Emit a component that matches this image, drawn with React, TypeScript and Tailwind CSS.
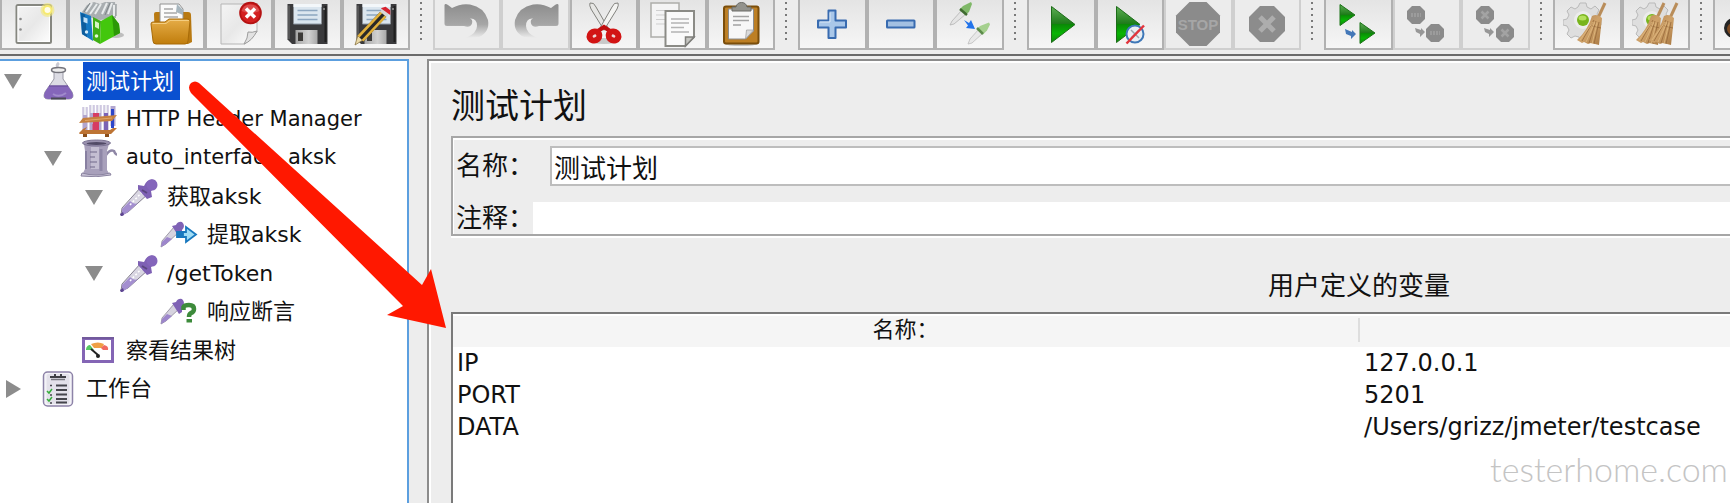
import type { ReactNode } from "react";

const Svg = ({ children, size = 48 }: { children: ReactNode; size?: number }) => (
  <svg
    width={size}
    height={size}
    viewBox={`0 0 ${size} ${size}`}
    className="shrink-0"
    aria-hidden="true"
  >
    {children}
  </svg>
);

const Gradients = () => (
  <svg className="absolute h-0 w-0" aria-hidden="true">
    <defs>
      <linearGradient id="folder" x1="0" y1="0" x2="0" y2="1">
        <stop offset="0" stopColor="#e6ad48" />
        <stop offset="1" stopColor="#c07d0c" />
      </linearGradient>
      <linearGradient id="play" x1="0" y1="0" x2="0" y2="1">
        <stop offset="0" stopColor="#5fae55" />
        <stop offset="0.49" stopColor="#1c7a18" />
        <stop offset="0.5" stopColor="#0a8a06" />
        <stop offset="0.75" stopColor="#08b404" />
        <stop offset="1" stopColor="#0c8a0a" />
      </linearGradient>
      <linearGradient id="paper" x1="0" y1="0" x2="1" y2="1">
        <stop offset="0" stopColor="#f4f4f4" />
        <stop offset="0.5" stopColor="#e8e8e8" />
        <stop offset="1" stopColor="#ffffff" />
      </linearGradient>
      <linearGradient id="curl" x1="0" y1="0" x2="0" y2="1">
        <stop offset="0" stopColor="#8d8d8d" />
        <stop offset="0.6" stopColor="#a6a6a6" />
        <stop offset="1" stopColor="#ececec" />
      </linearGradient>
      <linearGradient id="shutter" x1="0" y1="0" x2="1" y2="0">
        <stop offset="0" stopColor="#a5a5a5" />
        <stop offset="0.6" stopColor="#d2d2d2" />
        <stop offset="1" stopColor="#a8a8a8" />
      </linearGradient>
      <linearGradient id="straw" x1="0" y1="0" x2="1" y2="1">
        <stop offset="0" stopColor="#b08050" />
        <stop offset="0.5" stopColor="#cfa269" />
        <stop offset="1" stopColor="#a87842" />
      </linearGradient>
    </defs>
  </svg>
);

const NewIcon = () => (
  <Svg>
    <rect x="6.500" y="5" width="34.500" height="38" rx="1.500" fill="url(#paper)" stroke="#868780" strokeWidth="2" />
    <rect x="8" y="6.500" width="31.500" height="35" fill="none" stroke="#fff" />
    <circle cx="10.500" cy="19" r="1.300" fill="#8a8a8a" />
    <circle cx="10.500" cy="29.500" r="1.300" fill="#8a8a8a" />
    <circle cx="37.500" cy="10" r="7" fill="#f3e877" opacity="0.6" />
    <circle cx="37.500" cy="10" r="5" fill="#f6ea70" />
    <circle cx="37.500" cy="10" r="3" fill="#fffde8" />
  </Svg>
);

const TemplatesIcon = () => (
  <Svg>
    <ellipse cx="38" cy="35" rx="8" ry="3" fill="#a8a8a8" opacity="0.7" />
    <path d="M4 12 9 5 16 2 22 4 27 2H37L38 18 22 20 6 16Z" fill="#a9aeb1" />
    <path d="M8 12 14 3M12 14 19 4M17 14 23 4M24 14 29 3M30 14 34 3M36 5V16" stroke="#e8ebec" strokeWidth="2" />
    <path d="M6 12 12 3M27 15 32 3M38 4V16" stroke="#7d8488" strokeWidth="1" />
    <path d="M2 12 13 16 15 41 4 34Z" fill="#1679c4" />
    <path d="M3 13 7 14.500 9 37 4 34Z" fill="#0d5d9d" />
    <path d="m5.500 17 4 1.500v5l-4-1.500Z" fill="#bfe0f7" />
    <circle cx="8.500" cy="32" r="1.700" fill="#d5ecfa" />
    <path d="m15 17 8 4-1 23-7-4Z" fill="#3fae14" />
    <path d="m17 21 4 2v6l-4-2Z" fill="#d6f5c2" />
    <circle cx="18.500" cy="36" r="1.800" fill="#e3f8d6" />
    <path d="M23 21 34 15 41 24 42 33 22 44Z" fill="#43c70d" />
    <path d="M34 15 41 24 42 33 36 36Z" fill="#2c9807" />
  </Svg>
);

const OpenIcon = () => (
  <Svg>
    <path d="M7 14q0-2 2-2h32q3 0 3 3l1 27-4 2H8Z" fill="#b97a12" />
    <path d="M13 4h19l4 5v17H13Z" fill="#fbfbfb" stroke="#929292" />
    <path d="m30 4 6 6v5l-7-3Z" fill="#a6b5bd" />
    <path d="M17 9h9M17 13h13M17 17h14" stroke="#a9a9a9" strokeWidth="1.500" />
    <path d="M4 24q0-2 2-2h12l4-3h18q3 0 3 2l-2 20q0 3-3 3H9q-3 0-3-3Z" fill="url(#folder)" stroke="#a86b08" />
    <path d="M5.500 23.500H19l4-3h19" fill="none" stroke="#f3cd80" />
  </Svg>
);

const CloseIcon = () => (
  <Svg>
    <path d="M6 4h36v28L30 44H6Z" fill="url(#paper)" stroke="#b5b5b5" />
    <path d="M42 31q-5 2-9 1 0 6-4 12 8-3 13-13Z" fill="#e2e2e2" stroke="#9d9d9d" />
    <circle cx="35.500" cy="13" r="11.300" fill="#b51212" />
    <circle cx="35.500" cy="13" r="9.500" fill="#d32020" />
    <path d="M26.500 11a9.500 9.500 0 0 1 18 0q-9 4-18 0Z" fill="#e56a6a" opacity="0.6" />
    <path d="m31 8.500 9 9m0-9-9 9" stroke="#fff" strokeWidth="3.500" />
  </Svg>
);

const Floppy = () => (
  <>
    <path d="M4.500 4h40v40H9l-4.500-4.500Z" fill="#3a3a3c" />
    <path d="M6 5.500v33.500" stroke="#6f6f6f" />
    <path d="M42.500 6v36" stroke="#1f1f1f" strokeWidth="2" />
    <rect x="10.500" y="4" width="28" height="20" fill="#dbe6ef" />
    <path d="M10.500 4h28v3h-28Z" fill="#f3f7fa" />
    <path d="M14.500 10.500h20M14.500 15h20M14.500 19.500h20" stroke="#8ca6c0" strokeWidth="1.500" />
    <path d="M10.500 24h28" stroke="#8d98a3" />
    <rect x="12.500" y="30" width="22" height="14" fill="url(#shutter)" />
    <rect x="15" y="32.500" width="5" height="8.500" fill="#3c3a38" />
    <circle cx="41" cy="9" r="1" fill="#999" />
  </>
);

const SaveIcon = () => (
  <Svg>
    <Floppy />
  </Svg>
);

const SaveAsIcon = () => (
  <Svg>
    <Floppy />
    <path d="m3 45 3-10 5 5Z" fill="#ead9a8" stroke="#8a7440" strokeWidth="0.800" />
    <path d="m5.500 35.500 23-24 6 5-23 25Z" fill="#2a2a28" />
    <path d="m5.500 35.500 23-24 2 1.500-23 24.500ZM9.500 40l23-24.500 2 1.500-23 24.500Z" fill="#e2b13b" />
    <path d="m28 11.500 3-3 6.500 5-3 3.500Z" fill="#d8d8d8" />
    <path d="m30.500 8.500 3-1 4 3v3Z" fill="#d8232f" stroke="#d8232f" strokeWidth="1.500" />
  </Svg>
);

const UndoShape = () => (
  <path
    d="M1.500 5Q2 3 5 5L9 8Q18 3 27 4.500 41 7 45 20 47 32 36 37L23 38Q34 33 34 26 34 18 27 18.500q3 1 2 5-2 5-8 2.500H4q-2.500 0-2.500-2.500Z"
    fill="url(#curl)"
  />
);

const UndoIcon = () => (
  <Svg>
    <UndoShape />
  </Svg>
);

const RedoIcon = () => (
  <Svg>
    <g transform="matrix(-1 0 0 1 48 0)">
      <UndoShape />
    </g>
  </Svg>
);

const CutIcon = () => (
  <Svg>
    <ellipse cx="24" cy="41" rx="15" ry="3" fill="#c9c9c9" />
    <path d="M10 3q4-1 6 4l12 21-4 2L11 9Q9 5 10 3Z" fill="#e6e6e4" stroke="#82827e" />
    <path d="M38 3q-4-1-6 4L20 28l4 2L37 9q2-4 1-6Z" fill="#f4f4f2" stroke="#82827e" />
    <path d="m18 31 6-4 6 4" stroke="#c00f0f" strokeWidth="4" fill="none" />
    <ellipse cx="14.500" cy="36" rx="5" ry="4.500" transform="rotate(-25 14.500 36)" fill="#eed6d6" stroke="#d21414" strokeWidth="6" />
    <ellipse cx="33.500" cy="36" rx="5" ry="4.500" transform="rotate(25 33.500 36)" fill="#eed6d6" stroke="#d21414" strokeWidth="6" />
  </Svg>
);

const CopyIcon = () => (
  <Svg>
    <path d="M3 3h28v34H3Z" fill="#f4f4f4" stroke="#adada9" strokeWidth="1.500" />
    <path d="M8 10.500h17M8 15h9M8 19.500h9M8 24h9" stroke="#cfcfcf" />
    <path d="M17.500 11H46v26l-9 9H17.500Z" fill="#fafafa" stroke="#8b8b86" strokeWidth="2" />
    <path d="M23 19h18M23 23h18M23 27.500h13M23 32h18" stroke="#b4b4b4" strokeWidth="1.300" />
    <path d="M46 37h-8.500v9Z" fill="#c6c6c2" stroke="#7f7f7b" strokeWidth="1.500" />
  </Svg>
);

const PasteIcon = () => (
  <Svg>
    <ellipse cx="24" cy="44" rx="16" ry="2" fill="#c5c5c5" />
    <rect x="7" y="6.500" width="34.500" height="37" rx="2" fill="#bd7f24" stroke="#7b4e0b" strokeWidth="2" />
    <path d="M11.500 9h25v22l-8 8h-17Z" fill="#f7f7f7" stroke="#8c8c8c" />
    <path d="M36.500 30h-7l-1 9Z" fill="#dadada" stroke="#9a9a9a" strokeWidth="0.700" />
    <path d="M16 16.500h16M16 20.500h16M16 25h8" stroke="#a3a3a3" strokeWidth="1.500" />
    <path d="M15 7h4q1-4.500 5.500-4.500T30 7h4v4H15Z" fill="#93938d" stroke="#6b6b66" />
  </Svg>
);

const PlusIcon = () => (
  <Svg>
    <path d="M20.500 10.500h7v10H38v7H27.500V38h-7V27.500H10v-7h10.500Z" fill="#a9c7e9" stroke="#386bb0" strokeWidth="2" strokeLinejoin="round" />
    <path d="M22 12.500v9.500H12" fill="none" stroke="#dbe8f6" />
  </Svg>
);

const MinusIcon = () => (
  <Svg>
    <rect x="10" y="20.500" width="27.500" height="7" rx="0.500" fill="#a3c0e2" stroke="#386bb0" strokeWidth="2" />
  </Svg>
);

const ToggleIcon = () => (
  <Svg>
    <path d="m4 25 2-4L16 10l4 4L8 24Z" fill="#e4e4e4" stroke="#b3b3b3" strokeWidth="0.800" />
    <path d="m14 9 3-3 8-4 1 2-3 8-4 3Z" fill="#7fb868" />
    <path d="m14 9 7 6" stroke="#3f6a30" strokeWidth="2.500" />
    <path d="m18 20 5 3 2-3 4 9-9-1 2-2.500Z" fill="#2173ea" />
    <path d="m22 44 2-5 9-10 4 4-11 10Z" fill="#e8e8e8" stroke="#bcbcbc" strokeWidth="0.800" />
    <path d="m31 29 3-3 9-3.500 1 2-3 6-4 4Z" fill="#a5d08e" />
    <path d="m31 28 6 6" stroke="#5c8c4a" strokeWidth="2.500" />
  </Svg>
);

const StartIcon = () => (
  <Svg>
    <path d="M14.500 6.500 38 24.500 14.500 42.500Z" fill="url(#play)" stroke="#1c6c18" />
  </Svg>
);

const StartNoTimersIcon = () => (
  <Svg>
    <path d="M10.500 6.500 34 24.500 10.500 42.500Z" fill="url(#play)" stroke="#1c6c18" />
    <circle cx="29" cy="34" r="8.500" fill="#e9eef3" stroke="#3f78b8" strokeWidth="2" />
    <path d="m25 30 8 8m0-8-8 8" stroke="#9aa3ab" strokeWidth="1.500" />
    <path d="M20.500 43.500 38 25.500" stroke="#e2343c" strokeWidth="2.500" />
  </Svg>
);

const StopIcon = () => (
  <Svg>
    <path d="M15.500 2h17L46 15.500v17L32.500 46h-17L2 32.500v-17Z" fill="#8b8b8b" />
    <text x="24" y="30" textAnchor="middle" fontFamily="Liberation Sans, sans-serif" fontWeight="700" fontSize="15" fill="#a6a6a6">
      STOP
    </text>
  </Svg>
);

const ShutdownIcon = () => (
  <Svg>
    <path d="M17 6h14l11 11v14L31 42H17L6 31V17Z" fill="#8c8c8c" />
    <path d="m17 17 14 14m0-14L17 31" stroke="#adadad" strokeWidth="5" />
  </Svg>
);

const RemoteStartIcon = () => (
  <Svg>
    <path d="M6 4.500 21 15 6 25.500Z" fill="url(#play)" stroke="#1c7418" />
    <path d="M26 22.500 41 33 26 43.500Z" fill="url(#play)" stroke="#1c7418" />
    <path d="m11 29 1 5 5 2v3l5-5-4-4v2Z" fill="#4478b8" />
  </Svg>
);

const SmallOctagon = ({ x, y }: { x: number; y: number }) => (
  <path
    d={`M${x - 4} ${y - 9}h8l5 5v8l-5 5h-8l-5-5v-8Z`}
    fill="#8b8b8b"
  />
);

const RemoteStopIcon = () => (
  <Svg>
    <SmallOctagon x={13} y={15} />
    <SmallOctagon x={32} y={33} />
    <path d="M8 15h10M27 33h10" stroke="#9c9c9c" strokeWidth="4" strokeDasharray="2 1" />
    <path d="m12 28 1 4 4 2v3l5-5-4-4v2Z" fill="#979797" />
  </Svg>
);

const RemoteShutdownIcon = () => (
  <Svg>
    <SmallOctagon x={13} y={15} />
    <SmallOctagon x={33} y={33} />
    <path d="m9.500 11.500 7 7m0-7-7 7M29.500 29.500l7 7m0-7-7 7" stroke="#a3a3a3" strokeWidth="2.500" />
    <path d="m12 28 1 4 4 2v3l5-5-4-4v2Z" fill="#979797" />
  </Svg>
);

const Gear = () => (
  <>
    <path
      d="M17 3h6l1 4 4 2 4-3 4 4-2 4 2 4 2 1v6l-3 1-2 4 2 4-4 4-4-2-4 2-1 3h-5l-1-4-4-1-4 2-4-4 2-4-2-4-4-1v-5l4-1 2-4-2-4 4-4 4 2 3-2Z"
      fill="#dedede"
      stroke="#b9b9b9"
      strokeLinejoin="round"
    />
    <circle cx="20" cy="20" r="9" fill="#ececec" />
    <circle cx="20" cy="20" r="6" fill="#78b41c" />
    <ellipse cx="19.500" cy="18" rx="4" ry="2.500" fill="#b4e05c" />
  </>
);

const Broom = () => (
  <>
    <path d="M42 3 35 18" stroke="#b98d5a" strokeWidth="3" />
    <path d="M29 16q5-3 10 2l-3 27-8-2-3 1-4-2-2 1-5-3Q25 30 29 16Z" fill="url(#straw)" />
    <path d="M31 20 19 41m14-20-7 22m10-21-5 22M29 26l9 2" stroke="#96683a" strokeWidth="0.800" />
    <path d="M30 22 17 40m15-18-9 20m11-19-5 21" stroke="#e0ba82" strokeWidth="0.800" />
  </>
);

const ClearIcon = () => (
  <Svg>
    <Gear />
    <Broom />
  </Svg>
);

const ClearAllIcon = () => (
  <Svg>
    <Gear />
    <g transform="translate(-10 0)">
      <Broom />
    </g>
    <g transform="translate(3 0)">
      <Broom />
    </g>
  </Svg>
);

const SearchIcon = () => (
  <Svg>
    <path d="M4 22 10 17h9l4 5Z" fill="#2e2e2e" />
    <circle cx="10" cy="28" r="10" fill="#242424" />
    <circle cx="9" cy="29" r="6" fill="#7d4a22" />
    <circle cx="38" cy="28" r="10" fill="#242424" />
  </Svg>
);

const FlaskIcon = () => (
  <Svg size={38}>
    <path d="M20 1q-3 2-1 4" stroke="#c9c9d2" strokeWidth="3" fill="none" />
    <path d="M15 10v7L6 30q-3 7 3 7h21q6 0 3-7l-9-13v-7Z" fill="#dcdce4" stroke="#9a9aa6" />
    <path d="M10 24h19l4 6q3 7-3 7H9q-6 0-3-7Z" fill="#8566ba" />
    <path d="M10 24h19" stroke="#6f55a0" strokeWidth="1.500" />
    <path d="M14 32q6 4 13-1" stroke="#a08acc" strokeWidth="2" fill="none" />
    <ellipse cx="19.500" cy="8" rx="7" ry="2.500" fill="#eee" stroke="#74747c" strokeWidth="1.500" />
    <path d="M12 36.500h15" stroke="#4a4a55" strokeWidth="2" />
  </Svg>
);

const TubesIcon = () => (
  <Svg size={38}>
    <path d="M6 6v26M13 4v28M20 4v28M27 4v28M34 5v20" stroke="#b2a6cf" strokeWidth="5" />
    <path d="M6 6v8M13 4v8M20 4v8M27 4v8" stroke="#ececf2" strokeWidth="3" />
    <path d="M17 12v20" stroke="#d63c63" strokeWidth="6" />
    <path d="M27 12v18" stroke="#7b63b5" strokeWidth="4" />
    <path d="M33.500 8v19" stroke="#2c46c9" strokeWidth="3" />
    <path d="m4 17 34-3-5 6-33 2Z" fill="#c6803f" />
    <path d="M6 19.500 33 17" stroke="#e0a768" strokeWidth="1" />
    <path d="m4 28 4-2-4 6H0ZM34 27h4l-6 6H0l3-4h28Z" fill="#bd7434" />
    <path d="M4 33h4v3H4ZM26 33h4v3h-4Z" fill="#8a4f1c" />
    <path d="M16 23v6" stroke="#d63c63" strokeWidth="5" />
  </Svg>
);

const BeakerIcon = () => (
  <Svg size={38}>
    <path d="M27 16q4-6 8-4 1 3 3 4" stroke="#8f87a6" strokeWidth="2.500" fill="none" />
    <path d="M5 5h25l-2 7v19l3 5H3l3-6V12Z" fill="#a8a0bb" />
    <path d="M12 8h8v22h-8Z" fill="#c4bed2" />
    <path d="M22 10v22" stroke="#8e86a6" strokeWidth="3" />
    <path d="M7 12v18" stroke="#7e7698" strokeWidth="1.500" />
    <path d="M11 13h7M11 18h5M11 23h7M11 28h5" stroke="#706889" strokeWidth="1.200" />
    <ellipse cx="17.500" cy="4" rx="14" ry="3" fill="#9991ae" stroke="#7b7393" />
    <ellipse cx="17.500" cy="4.500" rx="10" ry="1.500" fill="#514a66" />
    <path d="M3 34q14 4 28 0l1 2q-15 3-30 1Z" fill="#c8c2d6" stroke="#8b84a0" />
  </Svg>
);

const DropperIcon = () => (
  <Svg size={38}>
    <path d="m1 37 1-7L21 9l7 7L8 34Z" fill="#d9d6e2" stroke="#85808f" />
    <path d="m2 31 8-8q4 4 8 2L8 34l-6 4Z" fill="#a48fd0" />
    <path d="m10 27 12-13" stroke="#fff" strokeWidth="1.500" strokeDasharray="2 2" />
    <path d="m18 7 6 1Q28-1 35 2q5 6-4 11l1 6-5 2-9-10Z" fill="#7e60b4" />
    <circle cx="32" cy="7" r="5.500" fill="#8465bb" />
    <path d="m22 12 5 3" stroke="#5b4780" strokeWidth="2" />
    <path d="m0 36 3-2 1 3-3 1.500Z" fill="#5d4590" />
  </Svg>
);

const SmallDropper = () => (
  <>
    <path d="m1 31 1-6L14 11l5 5L6 28Z" fill="#d6d3df" stroke="#8b8696" strokeWidth="0.800" />
    <path d="m2 26 5-5 5 2-6 5-5 3Z" fill="#9d86cc" />
    <path d="m12 10 4-1q2-4 6-3 4 4 0 8v5l-3 2Z" fill="#7f62b5" />
  </>
);

const ExtractorIcon = () => (
  <Svg size={38}>
    <SmallDropper />
    <path d="M17 16h9v-5l10 7.500L26 26v-5h-9v-1.500h6v-2h-6Z" fill="#9fdcf5" stroke="#1878be" strokeWidth="1.800" />
  </Svg>
);

const AssertionIcon = () => (
  <Svg size={38}>
    <SmallDropper />
    <path d="M23.500 17v-3q1-2 5.500-2 5 0 5 4 0 3-3 4-2 1-2 4" stroke="#3d8b3b" strokeWidth="4.500" fill="none" />
    <path d="M26.500 26h5.500v3.500h-5.500Z" fill="#3d8b3b" />
  </Svg>
);

const ResultsIcon = () => (
  <Svg size={38}>
    <rect x="4.500" y="7.500" width="29" height="23" fill="#fff" stroke="#8465b5" strokeWidth="3" />
    <path d="M3 7h32" stroke="#725a9c" strokeWidth="2" />
    <path d="M7 18q1-4 4-4l4 5H7Z" fill="#56c763" />
    <path d="M12 13q7-3 13 0l-2 4h-8Z" fill="#efa045" />
    <path d="M25 14q5 1 4 5h-5l-2-2Z" fill="#f06a62" />
    <path d="m12 18 7 6" stroke="#222" strokeWidth="2" />
    <circle cx="19" cy="25" r="2" fill="#222" />
  </Svg>
);

const WorkbenchIcon = () => (
  <Svg size={38}>
    <rect x="4.500" y="2" width="29" height="34" rx="4" fill="#f4f3f8" stroke="#8d83a8" strokeWidth="1.500" />
    <rect x="7.500" y="4" width="23" height="30" rx="2" fill="#e3e1ea" />
    <path d="M11 8h16v-2h-4V4h-2v2h-4V4h-2v2h-4Z" fill="#3f3f45" />
    <path d="M12 9.500h14" stroke="#77777f" strokeWidth="1.500" />
    <path d="M17 15.500h11M17 20h11M17 24.500h11M17 29h11M17 32.500h11" stroke="#45454c" strokeWidth="2" />
    <path d="m8 21 2 2 3-4M8 29l2 2 3-4" stroke="#35ad3a" strokeWidth="1.500" fill="none" />
    <path d="M11 15.500h2M11 25h2M11 33h2" stroke="#45454c" strokeWidth="1.500" />
  </Svg>
);

type Tool = { name: string; icon: ReactNode; disabled?: boolean };

const toolGroups: { width: string; tools: Tool[] }[] = [
  {
    width: "w-[410px]",
    tools: [
      { name: "新建", icon: <NewIcon /> },
      { name: "模板", icon: <TemplatesIcon /> },
      { name: "打开", icon: <OpenIcon /> },
      { name: "关闭", icon: <CloseIcon /> },
      { name: "保存", icon: <SaveIcon /> },
      { name: "另存为", icon: <SaveAsIcon /> },
    ],
  },
  {
    width: "w-[342px]",
    tools: [
      { name: "撤销", icon: <UndoIcon />, disabled: true },
      { name: "重做", icon: <RedoIcon />, disabled: true },
      { name: "剪切", icon: <CutIcon /> },
      { name: "复制", icon: <CopyIcon /> },
      { name: "粘贴", icon: <PasteIcon /> },
    ],
  },
  {
    width: "w-[206px]",
    tools: [
      { name: "展开", icon: <PlusIcon /> },
      { name: "折叠", icon: <MinusIcon /> },
      { name: "切换", icon: <ToggleIcon /> },
    ],
  },
  {
    width: "w-[274px]",
    tools: [
      { name: "启动", icon: <StartIcon /> },
      { name: "不停顿启动", icon: <StartNoTimersIcon /> },
      { name: "停止", icon: <StopIcon />, disabled: true },
      { name: "关机", icon: <ShutdownIcon />, disabled: true },
    ],
  },
  {
    width: "w-[206px]",
    tools: [
      { name: "远程启动", icon: <RemoteStartIcon /> },
      { name: "远程停止", icon: <RemoteStopIcon />, disabled: true },
      { name: "远程关机", icon: <RemoteShutdownIcon />, disabled: true },
    ],
  },
  {
    width: "w-[137px]",
    tools: [
      { name: "清除", icon: <ClearIcon /> },
      { name: "清除全部", icon: <ClearAllIcon /> },
    ],
  },
  { width: "w-[69px]", tools: [{ name: "查找", icon: <SearchIcon /> }] },
];

type TreeNode = {
  label: string;
  icon: ReactNode;
  indent: string;
  text: string;
  state?: "open" | "closed";
  selected?: boolean;
};

const treeNodes: TreeNode[] = [
  { label: "测试计划", icon: <FlaskIcon />, indent: "pl-0", text: "text-[22px]", state: "open", selected: true },
  { label: "HTTP Header Manager", icon: <TubesIcon />, indent: "pl-[40px]", text: "text-[21px]" },
  { label: "auto_interface_aksk", icon: <BeakerIcon />, indent: "pl-[40px]", text: "text-[21px]", state: "open" },
  { label: "获取aksk", icon: <DropperIcon />, indent: "pl-[81px]", text: "text-[22px]", state: "open" },
  { label: "提取aksk", icon: <ExtractorIcon />, indent: "pl-[121px]", text: "text-[22px]" },
  { label: "/getToken", icon: <DropperIcon />, indent: "pl-[81px]", text: "text-[22px]", state: "open" },
  { label: "响应断言", icon: <AssertionIcon />, indent: "pl-[121px]", text: "text-[22px]" },
  { label: "察看结果树", icon: <ResultsIcon />, indent: "pl-[40px]", text: "text-[22px]" },
  { label: "工作台", icon: <WorkbenchIcon />, indent: "pl-0", text: "text-[22px]", state: "closed" },
];

const variables = [
  { name: "IP", value: "127.0.0.1" },
  { name: "PORT", value: "5201" },
  { name: "DATA", value: "/Users/grizz/jmeter/testcase" },
];

const Toolbar = () => (
  <header className="flex h-[56px] items-start overflow-hidden border-b-2 border-[#6a6a6a] bg-[#ededed]">
    {toolGroups.map((group, i) => (
      <div key={i} className="flex shrink-0">
        {i > 0 && (
          <svg width="23" height="48" className="shrink-0" aria-hidden="true">
            <path d="M11 2v40" stroke="#7a7a7a" strokeWidth="2" strokeDasharray="2 4" />
          </svg>
        )}
        <div className={`flex ${group.width}`}>
          {group.tools.map((tool) => (
            <button
              key={tool.name}
              type="button"
              aria-label={tool.name}
              disabled={tool.disabled}
              className={`flex h-[50px] min-w-0 flex-1 items-center justify-center border-x-2 border-b-2 ${
                tool.disabled
                  ? "border-[#cfcfcf] bg-[#ececec]"
                  : "border-[#b1b1b1] bg-linear-to-b from-[#e4e4e4] to-[#f6f6f6]"
              }`}
            >
              {tool.icon}
            </button>
          ))}
        </div>
      </div>
    ))}
  </header>
);

const Tree = () => (
  <nav className="w-[409px] shrink-0 border-t-2 border-r-2 border-[#5c9fdf] bg-white pt-px">
    <ul className="grid h-[346px] auto-rows-fr">
      {treeNodes.map((node) => (
        <li key={node.label} className={`flex items-center ${node.indent}`}>
          <span className="flex w-[30px] shrink-0 pl-1">
            {node.state && (
              <svg width="18" height="18" viewBox="0 0 18 18" aria-hidden="true">
                <path d={node.state === "open" ? "M0 2h18L9 17Z" : "M2 0v18l15-9Z"} fill="#8c8c8c" />
              </svg>
            )}
          </span>
          <span className="flex w-[53px] shrink-0 justify-center pl-0.5">{node.icon}</span>
          <span
            className={`flex h-full items-center whitespace-nowrap px-[3px] ${node.text} ${
              node.selected ? "bg-[#0a50d0] pr-1.5 text-white" : ""
            }`}
          >
            {node.label}
          </span>
        </li>
      ))}
    </ul>
  </nav>
);

const Editor = () => (
  <main className="min-w-0 flex-1 overflow-hidden border-t-2 border-l-2 border-[#8c8c8c]">
    <div className="flex h-full flex-col border-t-2 border-l-2 border-white pl-5">
      <div className="flex w-[142%] flex-1 flex-col">
        <h1 className="mt-[18px] text-[34px] leading-[50px]">测试计划</h1>

        <div className="mt-[5px] border-2 border-[#a6a6a6] text-[26px] whitespace-nowrap shadow-[inset_1px_2px_0_#fff,0_2px_0_#fff]">
          <div className="flex items-center pt-[8px] pl-[3px]">
            <label htmlFor="plan-name" className="w-[94px] shrink-0">
              名称：
            </label>
            <input
              id="plan-name"
              defaultValue="测试计划"
              className="h-[40px] min-w-0 flex-1 border-2 border-[#bdbdbd] bg-white px-[2px]"
            />
          </div>
          <div className="mt-[16px] flex items-center pl-[3px]">
            <label htmlFor="plan-comments" className="w-[77px] shrink-0 leading-[32px]">
              注释：
            </label>
            <input id="plan-comments" className="h-[32px] min-w-0 flex-1 bg-white px-[2px]" />
          </div>
        </div>

        <h2 id="variables" className="mt-[31px] text-center text-[26px] leading-[38px]">
          用户定义的变量
        </h2>

        <div className="mt-[7px] flex-1 border-t-2 border-l-2 border-[#7a7a7a] bg-white">
          <table aria-labelledby="variables" className="w-full table-fixed border-collapse">
            <thead>
              <tr className="border-t-2 border-white bg-[#f5f5f5]">
                <th scope="col" className="p-0 text-[22px] font-normal">
                  <div className="mt-0.5 mb-[5px] border-r-2 border-[#dedede] leading-[24px]">名称：</div>
                </th>
                <th scope="col" aria-label="值" className="p-0"></th>
              </tr>
            </thead>
            <tbody className="text-[24px] leading-[32px]">
              {variables.map((variable) => (
                <tr key={variable.name}>
                  <td className="px-1 py-0">{variable.name}</td>
                  <td className="px-1 py-0">{variable.value}</td>
                </tr>
              ))}
            </tbody>
          </table>
        </div>
      </div>
    </div>
  </main>
);

export default function App() {
  return (
    <div className="relative flex min-h-screen flex-col overflow-hidden bg-[#ededed] font-['DejaVu_Sans','Noto_Sans_CJK_SC',sans-serif] text-[#111]">
      <Gradients />
      <Toolbar />
      <div className="mt-[3px] flex flex-1 gap-[18px]">
        <Tree />
        <Editor />
      </div>

      {/* arrow from the plan node to the variables table */}
      <svg
        width="260"
        height="250"
        viewBox="188 80 260 250"
        className="pointer-events-none absolute top-[80px] left-[188px]"
        aria-hidden="true"
      >
        <path d="M199 83 422 285 431 269 446 328 387 315 403 306 191 93Q187 87 191 83 195 80 199 83Z" fill="#ff1800" />
      </svg>

      <p className="pointer-events-none absolute right-0.5 bottom-3.5 font-['Lato',sans-serif] text-[34px] leading-[40px] font-light text-[#c4c4c4]">
        testerhome.com
      </p>
    </div>
  );
}
